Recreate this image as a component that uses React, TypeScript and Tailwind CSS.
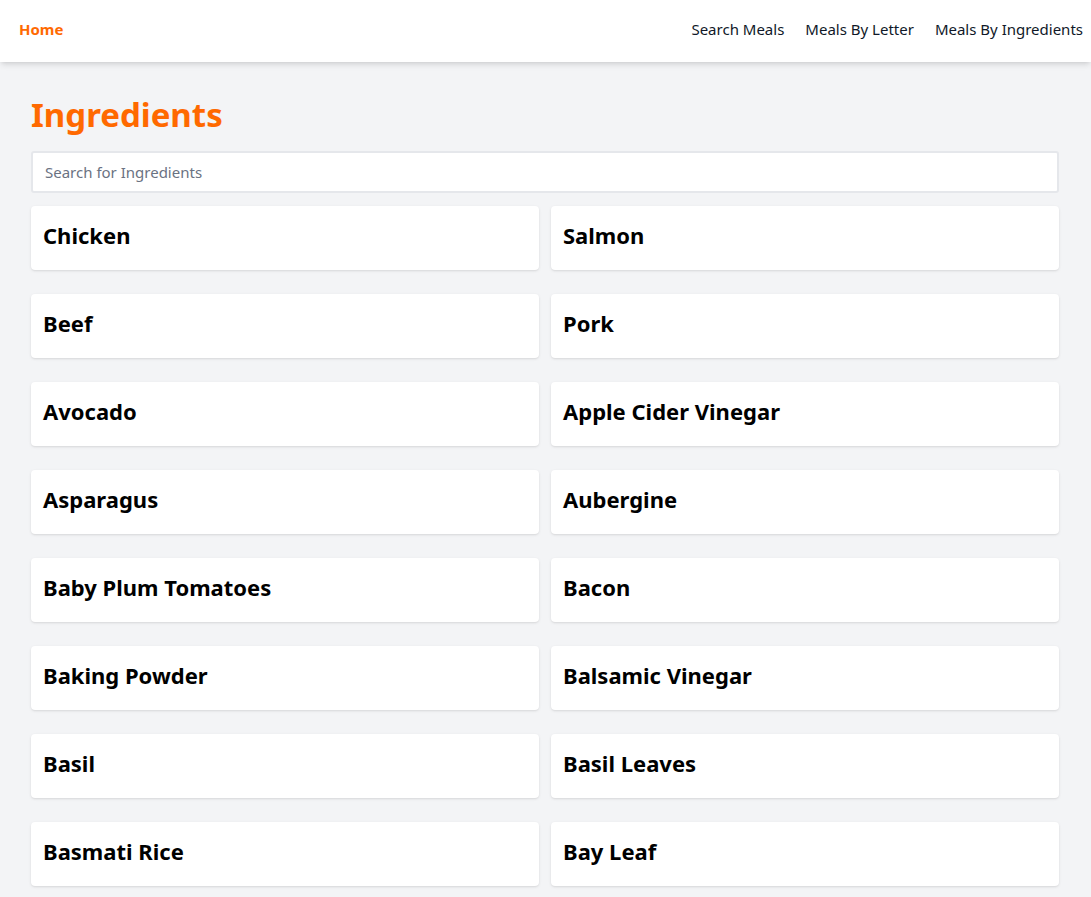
const ingredients = [
  "Chicken",
  "Salmon",
  "Beef",
  "Pork",
  "Avocado",
  "Apple Cider Vinegar",
  "Asparagus",
  "Aubergine",
  "Baby Plum Tomatoes",
  "Bacon",
  "Baking Powder",
  "Balsamic Vinegar",
  "Basil",
  "Basil Leaves",
  "Basmati Rice",
  "Bay Leaf",
];

function Header() {
  return (
    <header className="h-[62px] bg-white shadow-md flex items-center justify-between pl-[19px] pr-2 pb-[3px] relative z-10">
      <a href="#" className="text-[15px] font-bold text-orange-500">
        Home
      </a>
      <nav className="flex items-center gap-[21px] text-[15px] text-gray-900">
        <a href="#">Search Meals</a>
        <a href="#">Meals By Letter</a>
        <a href="#">Meals By Ingredients</a>
      </nav>
    </header>
  );
}

function App() {
  return (
    <div
      className="min-h-screen bg-gray-100"
      style={{ fontFamily: '"Noto Sans", "Open Sans", sans-serif' }}
    >
      <Header />
      <main className="pl-[31px] pr-8 pt-8 pb-8">
        <h1 className="text-[33px] leading-10 font-bold text-orange-500 mb-4 mt-px">Ingredients</h1>
        <input
          type="text"
          placeholder="Search for Ingredients"
          className="w-full h-[42px] bg-white border-2 border-gray-200 rounded-[3px] px-3 pb-px text-[15px] placeholder:text-gray-500 outline-none"
        />
        <div className="grid grid-cols-2 gap-x-3 gap-y-6 mt-[13px]">
          {ingredients.map((name) => (
            <div key={name} className="bg-white rounded shadow h-16 px-3 pb-[5px] flex items-center">
              <h3 className="text-[22px] font-bold text-black">{name}</h3>
            </div>
          ))}
        </div>
      </main>
    </div>
  );
}

export default App;
